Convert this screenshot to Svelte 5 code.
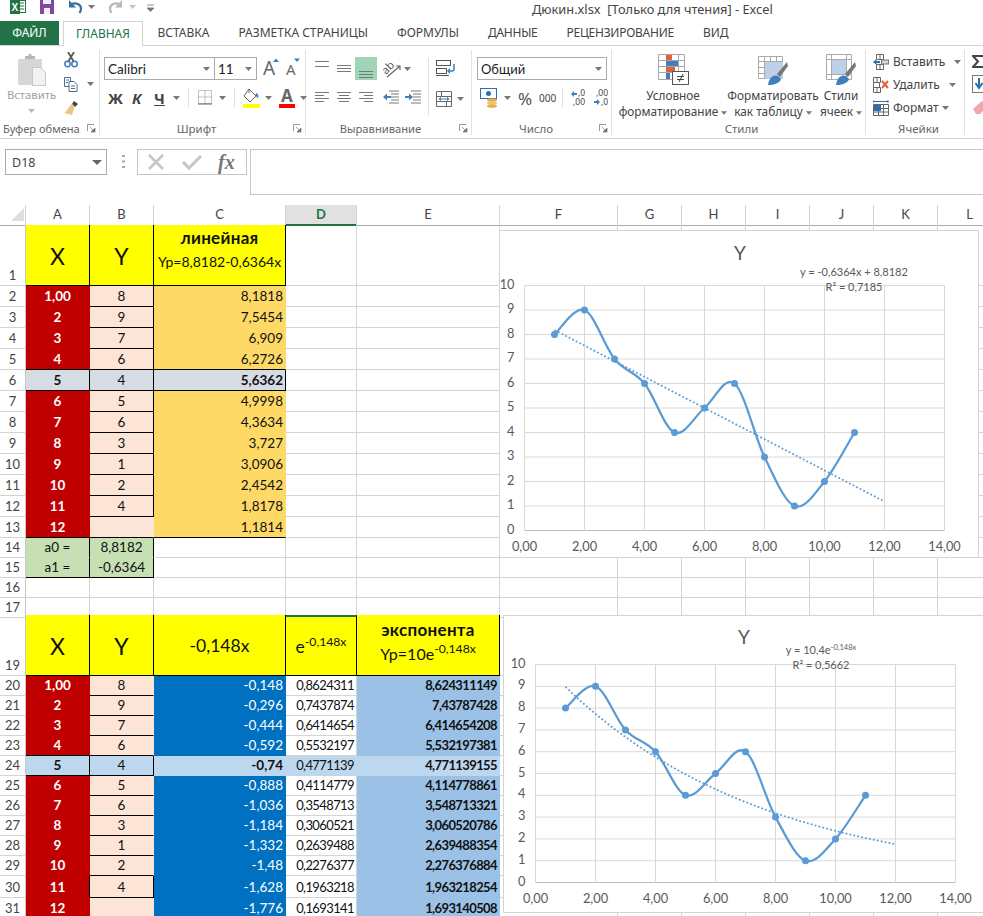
<script>
  const COLS = ['A', 'B', 'C', 'D', 'E', 'F', 'G', 'H', 'I', 'J', 'K', 'L'];
  const EMPTY_TAIL = 7; // F..L stay empty, charts lie over them

  const xs = ['1,00', '2', '3', '4', '5', '6', '7', '8', '9', '10', '11', '12'];
  const ys = ['8', '9', '7', '6', '4', '5', '6', '3', '1', '2', '4', ''];
  const linear = ['8,1818', '7,5454', '6,909', '6,2726', '5,6362', '4,9998', '4,3634', '3,727', '3,0906', '2,4542', '1,8178', '1,1814'];
  const power = ['-0,148', '-0,296', '-0,444', '-0,592', '-0,74', '-0,888', '-1,036', '-1,184', '-1,332', '-1,48', '-1,628', '-1,776'];
  const expo = ['0,8624311', '0,7437874', '0,6414654', '0,5532197', '0,4771139', '0,4114779', '0,3548713', '0,3060521', '0,2639488', '0,2276377', '0,1963218', '0,1693141'];
  const fit = ['8,624311149', '7,43787428', '6,414654208', '5,532197381', '4,771139155', '4,114778861', '3,548713321', '3,060520786', '2,639488354', '2,276376884', '1,963218254', '1,693140508'];

  const blank = (cls = '') => ({ t: '', cls });

  function firstTable() {
    return xs.map((x, i) => {
      const mid = i === 4;
      const rule = i === 3 || mid || i === 11 ? ' bb' : '';
      return {
        n: i + 2,
        h: 21,
        cells: [
          { t: x, cls: (mid ? 'grey br' : 'red') + ' mid strong' + rule },
          { t: ys[i], cls: (mid ? 'grey' : 'peach') + ' mid bb' + (i < 11 ? ' br' : '') },
          { t: linear[i], cls: (mid ? 'grey br strong' : 'orange') + ' end' + rule },
          blank(),
          blank()
        ]
      };
    });
  }

  function secondTable() {
    return xs.map((x, i) => {
      const mid = i === 4;
      const rule = i === 3 || mid ? ' bb' : '';
      return {
        n: i + 20,
        h: i === 10 ? 22 : i === 11 ? 21 : 20,
        cells: [
          { t: x, cls: (mid ? 'pale br' : 'red') + ' mid strong' + rule + (i === 10 ? ' br' : '') },
          { t: ys[i], cls: (mid ? 'pale br' : 'peach') + ' mid' + (i < 11 ? ' bb' : '') + (i === 10 ? ' br' : '') },
          { t: power[i], cls: (mid ? 'pale strong' : 'blue') + ' end' },
          { t: expo[i], cls: (mid ? 'pale' : '') + ' end long' },
          { t: fit[i], cls: (mid ? 'pale' : 'sky') + ' end strong long' }
        ]
      };
    });
  }

  const rows = [
    {
      n: 1,
      h: 61,
      cells: [
        { t: 'X', cls: 'yellow big br bb' },
        { t: 'Y', cls: 'yellow big br bb' },
        { t: 'Yp=8,8182-0,6364x', title: 'линейная', cls: 'yellow head br bb' },
        blank(),
        blank()
      ]
    },
    ...firstTable(),
    {
      n: 14,
      h: 20,
      cells: [{ t: 'a0 =', cls: 'green mid br' }, { t: '8,8182', cls: 'green mid br' }, blank(), blank(), blank()]
    },
    {
      n: 15,
      h: 20,
      cells: [{ t: 'a1 =', cls: 'green mid br bb' }, { t: '-0,6364', cls: 'green mid br bb' }, blank(), blank(), blank()]
    },
    { n: 16, h: 20, cells: [blank(), blank(), blank(), blank(), blank()] },
    { n: 17, h: 17, cells: [blank(), blank(), blank(), blank(), blank()] },
    {
      n: 19,
      h: 61,
      cells: [
        { t: 'X', cls: 'yellow big br bb' },
        { t: 'Y', cls: 'yellow big br bb' },
        { t: '-0,148x', cls: 'yellow medium br bb' },
        { t: 'e', sup: '-0,148x', cls: 'yellow medium up br bb sel' },
        { t: 'Yp=10e', sup: '-0,148x', title: 'экспонента', cls: 'yellow head tall br bb' }
      ]
    },
    ...secondTable()
  ];

  // Excel's smoothed scatter line: a Catmull-Rom curve through the points
  function smooth(points) {
    let d = `M${points[0][0]} ${points[0][1]}`;
    for (let i = 0; i < points.length - 1; i++) {
      const p0 = points[Math.max(i - 1, 0)];
      const p1 = points[i];
      const p2 = points[i + 1];
      const p3 = points[Math.min(i + 2, points.length - 1)];
      const c1 = [p1[0] + (p2[0] - p0[0]) / 6, p1[1] + (p2[1] - p0[1]) / 6];
      const c2 = [p2[0] - (p3[0] - p1[0]) / 6, p2[1] - (p3[1] - p1[1]) / 6];
      d += `C${c1[0]} ${c1[1]} ${c2[0]} ${c2[1]} ${p2[0]} ${p2[1]}`;
    }
    return d;
  }

  function makeChart(o) {
    const px = (x) => o.x0 + (x / 14) * o.w;
    const py = (y) => o.y0 + o.h - (y / 10) * o.h;
    const values = ys.slice(0, 11).map(Number);
    const points = values.map((y, i) => [px(i + 1), py(y)]);
    const trend = [];
    for (let x = 1; x <= 12.001; x += 0.25) trend.push(`${px(x)},${py(o.f(x))}`);
    return {
      ...o,
      points,
      line: smooth(points),
      trend: trend.join(' '),
      xTicks: [0, 2, 4, 6, 8, 10, 12, 14].map((v) => ({ at: px(v), label: v + ',00' })),
      yTicks: [0, 1, 2, 3, 4, 5, 6, 7, 8, 9, 10].map((v) => ({ at: py(v), label: String(v) }))
    };
  }

  const chartA = makeChart({
    cls: 'chart-a', width: 480, height: 328, x0: 24.5, y0: 54.5, w: 420, h: 245,
    f: (x) => 8.8182 - 0.6364 * x,
    titleX: 240, titleY: 29, eqX: 354, eqY: 45, r2Y: 60, eq: 'y = -0,6364x + 8,8182', r2: 'R² = 0,7185'
  });
  const chartB = makeChart({
    cls: 'chart-b', width: 490, height: 298, x0: 31.5, y0: 48.5, w: 420, h: 218,
    f: (x) => 10.4 * Math.exp(-0.148 * x),
    titleX: 240, titleY: 28, eqX: 317, eqY: 38, r2Y: 53, eq: 'y = 10,4e', eqSup: '-0,148x', r2: 'R² = 0,5662'
  });
</script>

{#snippet caret(cls = '')}
  <svg class="caret {cls}" width="7" height="4" viewBox="0 0 7 4"><path d="M0 0h7L3.5 4z" fill="#777" /></svg>
{/snippet}

{#snippet launcher()}
  <svg class="launcher" width="9" height="9" viewBox="0 0 9 9">
    <path d="M.5 7V.5H7" fill="none" stroke="#999" />
    <path d="M3 3l4 4M8 4v4H4z" fill="#777" stroke="#777" stroke-width=".7" />
  </svg>
{/snippet}

{#snippet lines(ws, gap = 3, y0 = 4)}
  <svg width="15" height="15" viewBox="0 0 15 15">
    {#each ws as w, i}
      <rect x={w[0]} y={y0 + i * gap} width={w[1]} height="1" fill="#777" />
    {/each}
  </svg>
{/snippet}

{#snippet chart(c)}
  <div class="chart {c.cls}">
    <svg width={c.width} height={c.height} viewBox="0 0 {c.width} {c.height}">
      {#each c.yTicks as t}
        <line x1={c.x0} x2={c.x0 + c.w} y1={t.at} y2={t.at} stroke={t.label === '0' ? '#bfbfbf' : '#d9d9d9'} />
        <text class="tick" x={c.x0 - 10} y={t.at + 3} text-anchor="end">{t.label}</text>
      {/each}
      {#each c.xTicks as t}
        <line x1={t.at} x2={t.at} y1={c.y0} y2={c.y0 + c.h} stroke="#d9d9d9" />
        <text class="tick" x={t.at} y={c.y0 + c.h + 20} text-anchor="middle">{t.label}</text>
      {/each}
      <polyline points={c.trend} fill="none" stroke="#5b9bd5" stroke-width="1.75" stroke-dasharray="1.8 2.2" />
      <path d={c.line} fill="none" stroke="#5b9bd5" stroke-width="2.25" stroke-linecap="round" />
      {#each c.points as p}
        <circle cx={p[0]} cy={p[1]} r="3.5" fill="#5b9bd5" />
      {/each}
      <text class="ctitle" x={c.titleX} y={c.titleY} text-anchor="middle">Y</text>
      <text class="eq" x={c.eqX} y={c.eqY} text-anchor="middle">{c.eq}{#if c.eqSup}<tspan class="eqsup" dy="-4">{c.eqSup}</tspan>{/if}</text>
      <text class="eq" x={c.eqX} y={c.r2Y} text-anchor="middle">{c.r2}</text>
    </svg>
  </div>
{/snippet}

<div class="app">
  <header class="titlebar">
    <svg class="qat" width="160" height="21" viewBox="0 0 160 21">
      <rect x="17.5" y="0.5" width="8" height="12" fill="#fff" stroke="#217346" />
      <path d="M19 3h5M19 6h5M19 9h5" stroke="#217346" />
      <rect x="10" y="0" width="10" height="14" fill="#217346" />
      <text x="11.5" y="11" class="qat-x">X</text>
      <path d="M40 0h14v14H40z" fill="#7f4a9e" />
      <rect x="43" y="0" width="8" height="4" fill="#f3eef6" />
      <rect x="44" y="8" width="6" height="6" fill="#f3eef6" />
      <path d="M71 4.5c5-2.5 10 0 10 4 0 1.500-.5 3-1.500 4.500" fill="none" stroke="#3a6ea5" stroke-width="2.2" />
      <path d="M69 0v7.500h7z" fill="#3a6ea5" />
      <path d="M88 5h7l-3.500 4z" fill="#777" />
      <path d="M120 4.500c-5-2.500-10 0-10 4 0 1.500.5 3 1.500 4.500" fill="none" stroke="#b8b8b8" stroke-width="2.2" />
      <path d="M122 0v7.500h-7z" fill="#b8b8b8" />
      <path d="M129 5h7l-3.500 4z" fill="#c4c4c4" />
      <path d="M147 5h7M147 8h7l-3.500 3.500z" fill="#777" stroke="#777" stroke-width=".8" />
    </svg>
    <span class="doc">Дюкин.xlsx&nbsp; [Только для чтения] - Excel</span>
  </header>

  <nav class="tabs">
    <span class="tab file">ФАЙЛ</span>
    <span class="tab active">ГЛАВНАЯ</span>
    <span class="tab">ВСТАВКА</span>
    <span class="tab">РАЗМЕТКА СТРАНИЦЫ</span>
    <span class="tab">ФОРМУЛЫ</span>
    <span class="tab tight">ДАННЫЕ</span>
    <span class="tab tight">РЕЦЕНЗИРОВАНИЕ</span>
    <span class="tab">ВИД</span>
  </nav>

  <section class="ribbon">
    <!-- Буфер обмена -->
    <div class="grp g-clip">
      <div class="body row">
        <div class="paste">
          <svg width="30" height="34" viewBox="0 0 30 34">
            <rect x="1" y="6" width="24" height="26" rx="1" fill="#d8d5d7" />
            <path d="M8 6V3h3.500V1h3v2H18v3z" fill="#b9b5b8" />
            <path d="M15.500 14.500h8l5 5v13h-13z" fill="#f4f1f5" stroke="#c9c5ca" />
          </svg>
          <span class="paste-text">Вставить</span>
          {@render caret('paste-caret')}
        </div>
        <div class="clip-tools">
          <svg width="16" height="16" viewBox="0 0 16 16">
            <path d="M5 10L11 0M11 10L5 0" stroke="#5a5a5a" stroke-width="1.800" />
            <circle cx="4.500" cy="12" r="2.700" fill="none" stroke="#3f7fbf" stroke-width="1.500" />
            <circle cx="11.500" cy="12" r="2.700" fill="none" stroke="#3f7fbf" stroke-width="1.500" />
          </svg>
          <div class="row center">
            <svg width="16" height="16" viewBox="0 0 16 16">
              <path d="M1.500 1.500h6v9h-6z" fill="#fff" stroke="#4d6f8f" />
              <path d="M6 5.500h5l3 3v7H6z" fill="#fff" stroke="#4d6f8f" />
              <path d="M3 4h3M3 6.500h2M8 10h4M8 12.500h4" stroke="#4d6f8f" />
            </svg>
            {@render caret('ml8')}
          </div>
          <svg width="17" height="16" viewBox="0 0 17 16">
            <path d="M11 1l4 3-3 3-3-3z" fill="#444" />
            <path d="M9 4l3 3-4 8-7-3z" fill="#edc587" transform="rotate(-8 8 8)" />
          </svg>
        </div>
      </div>
      <div class="lab lab-clip">Буфер обмена{@render launcher()}</div>
    </div>

    <!-- Шрифт -->
    <div class="grp g-font">
      <div class="body">
        <div class="row f-top">
          <div class="combo c-font"><span>Calibri</span>{@render caret()}</div>
          <div class="combo c-size"><span>11</span>{@render caret()}</div>
          <svg class="ml6" width="17" height="23" viewBox="0 0 17 23">
            <text class="glyph-a" x="0" y="18">A</text>
            <path d="M10 5l3-3.500L16 5z" fill="#3f7fbf" />
          </svg>
          <svg class="ml6" width="15" height="23" viewBox="0 0 15 23">
            <text class="glyph-a small" x="0" y="18">A</text>
            <path d="M8 1.500h6L11 5z" fill="#3f7fbf" />
          </svg>
        </div>
        <div class="row center f-bottom">
          <span class="ft ft-b">Ж</span>
          <span class="ft ft-i">К</span>
          <span class="ft ft-u">Ч</span>
          {@render caret('ml8')}
          <i class="vsep ml8"></i>
          <svg class="ml9" width="14" height="15" viewBox="0 0 14 15">
            <path d="M.5.500h13v13H.5zM7 .5v13M.5 7h13" fill="none" stroke="#8a8a8a" stroke-dasharray="1 1" />
            <path d="M0 14h14" stroke="#666" />
          </svg>
          {@render caret('ml7')}
          <i class="vsep ml8"></i>
          <svg class="ml8" width="17" height="20" viewBox="0 0 17 20">
            <path d="M6 1l7 7-6 6-6-6z" fill="#fff" stroke="#666" />
            <path d="M6 1v4" stroke="#666" />
            <path d="M13 5c2 .5 3 2.500 2 5-2-1-3-3-2-5z" fill="#3f7fbf" />
            <rect y="16" width="17" height="4" fill="#ff0" />
          </svg>
          {@render caret('ml5')}
          <svg class="ml7" width="16" height="20" viewBox="0 0 16 20">
            <text class="glyph-a bold" x="2" y="14">A</text>
            <rect y="16" width="16" height="4" fill="#f00" />
          </svg>
          {@render caret('ml5')}
        </div>
      </div>
      <div class="lab shift">Шрифт{@render launcher()}</div>
    </div>

    <!-- Выравнивание -->
    <div class="grp g-align">
      <div class="body row">
        <div class="align-left">
          <div class="row a-top">
            <div class="a-slot">{@render lines([[0, 14], [0, 14]], 5, 3)}</div>
            <div class="a-slot ml7 down4">{@render lines([[0, 14], [0, 14], [0, 14]], 3, 3)}</div>
            <div class="a-on">{@render lines([[0, 14], [0, 14], [0, 14]], 3, 6)}</div>
            <svg class="ml6 a-orient" width="18" height="19" viewBox="0 0 18 19">
              <text class="orient" transform="rotate(-45 5 11)" x="0" y="13">ab</text>
              <path d="M4 18L17 7M13 7h4v4" fill="none" stroke="#666" stroke-width="1.200" />
            </svg>
            {@render caret('ml3 a-caret')}
          </div>
          <div class="row a-bottom">
            <div class="a-slot">{@render lines([[0, 14], [0, 9], [0, 14], [0, 9]], 3, 2)}</div>
            <div class="a-slot ml7">{@render lines([[0, 14], [2, 10], [0, 14], [2, 10]], 3, 2)}</div>
            <div class="a-slot ml7">{@render lines([[0, 14], [5, 9], [0, 14], [5, 9]], 3, 2)}</div>
            <svg class="ml9" width="16" height="15" viewBox="0 0 16 15">
              <path d="M6 2h10M8 5h8M8 8h8M8 11h8M6 14h10" stroke="#777" />
              <path d="M0 8l4-3.500V7h4v2H4v2.500z" fill="#3f7fbf" />
            </svg>
            <svg class="ml6" width="16" height="15" viewBox="0 0 16 15">
              <path d="M6 2h10M8 5h8M8 8h8M8 11h8M6 14h10" stroke="#777" />
              <path d="M8 8L4 4.500V7H0v2h4v2.500z" fill="#3f7fbf" />
            </svg>
          </div>
        </div>
        <i class="vsep tall"></i>
        <div class="align-right">
          <svg width="20" height="16" viewBox="0 0 20 16">
            <rect x=".5" y=".5" width="14" height="5" fill="#fff" stroke="#555" />
            <rect x=".5" y="8.500" width="10" height="5" fill="#fff" stroke="#555" />
            <path d="M0 15.500h13" stroke="#555" />
            <path d="M18 4v5a2 2 0 01-2 2h-4" fill="none" stroke="#3f7fbf" stroke-width="1.500" />
            <path d="M14 8l-3 3 3 3z" fill="#3f7fbf" />
          </svg>
          <div class="row center merge">
            <svg width="16" height="16" viewBox="0 0 16 16">
              <path d="M.5.500h15v15H.5zM.5 5.500h15M.5 10.500h15M5.500.5v5M10.500 10.500v5" fill="none" stroke="#666" />
              <rect x="1" y="6" width="14" height="4" fill="#fff" />
              <path d="M3 8h10" stroke="#3f7fbf" />
              <path d="M5 6L2.500 8 5 10zM11 6l2.500 2L11 10z" fill="#3f7fbf" />
            </svg>
            {@render caret('ml5')}
          </div>
        </div>
      </div>
      <div class="lab shift narrow">Выравнивание{@render launcher()}</div>
    </div>

    <!-- Число -->
    <div class="grp g-num">
      <div class="body">
        <div class="combo c-num"><span>Общий</span>{@render caret()}</div>
        <div class="row center n-bottom">
          <svg width="18" height="20" viewBox="0 0 18 20">
            <rect x=".5" y=".5" width="16" height="10" fill="#fff" stroke="#2b6fb0" />
            <circle cx="8.500" cy="5.500" r="2.500" fill="#2b6fb0" />
            <ellipse cx="12" cy="12" rx="5" ry="1.800" fill="#e8b04c" />
            <ellipse cx="12" cy="15" rx="5" ry="1.800" fill="#eec477" />
            <ellipse cx="12" cy="18" rx="5" ry="1.800" fill="#e8b04c" />
          </svg>
          {@render caret('ml6')}
          <span class="pct">%</span>
          <span class="kilo">000</span>
          <i class="vsep ml8"></i>
          <svg class="ml8 decimal" width="17" height="19" viewBox="0 0 17 19">
            <text class="dec" x="7" y="7">,0</text>
            <text class="dec" x="2" y="16">,00</text>
            <path d="M0 5l3-3v2h3v2H3v2z" fill="#3f7fbf" />
          </svg>
          <svg class="ml6 decimal" width="17" height="19" viewBox="0 0 17 19">
            <text class="dec" x="2" y="7">,00</text>
            <text class="dec" x="7" y="16">,0</text>
            <path d="M6 13L3 10v2H0v2h3v2z" fill="#3f7fbf" />
          </svg>
        </div>
      </div>
      <div class="lab shift">Число{@render launcher()}</div>
    </div>

    <!-- Стили -->
    <div class="grp g-styles">
      <div class="body row">
        <div class="bigbtn b1">
          <svg width="31" height="32" viewBox="0 0 31 32">
            <path d="M.5.500h26v25H.5zM.5 6.500h26M.5 12.500h26M.5 18.500h26M8.500.5v25M20.500.5v25" fill="none" stroke="#a8a8a8" />
            <rect x="8" y="1" width="6" height="5" fill="#e0623a" />
            <rect x="8" y="7" width="12" height="5" fill="#3f7fbf" />
            <rect x="8" y="13" width="9" height="5" fill="#e0623a" />
            <rect x="8" y="19" width="4" height="6" fill="#3f7fbf" />
            <rect x="14.500" y="17.500" width="16" height="13" fill="#fff" stroke="#555" />
            <path d="M19 22.500h7M19 25.500h7M25 20l-4 8" stroke="#444" />
          </svg>
          <span>Условное</span>
          <span>форматирование {@render caret('inl')}</span>
        </div>
        <div class="bigbtn b2">
          <svg class="drop2" width="30" height="30" viewBox="0 0 30 30">
            <path d="M.5.500h24v22H.5zM.5 5.500h24M.5 11.500h24M.5 17.500h24M6.500.5v22M12.500.5v22M18.500.5v22" fill="none" stroke="#aaa" />
            <rect x="7" y="6" width="18" height="17" fill="#bdd0e6" />
            <path d="M29 6l-10 12 3 3L30 10z" fill="#777" />
            <path d="M20 20c-5-2-9 2-10 9 6 0 12-2 13-6z" fill="#3f7fbf" />
          </svg>
          <span>Форматировать</span>
          <span>как таблицу {@render caret('inl')}</span>
        </div>
        <div class="bigbtn b3">
          <svg width="30" height="32" viewBox="0 0 30 32">
            <path d="M.5.500h25v25H.5zM.5 5.500h25M.5 20.500h25M5.500.5v25M20.500.5v25" fill="none" stroke="#aaa" />
            <rect x="6" y="6" width="14" height="14" fill="#bdd0e6" />
            <path d="M29 8L19 20l3 3 8-11z" fill="#777" />
            <path d="M20 22c-5-2-9 2-10 9 6 0 12-2 13-6z" fill="#3f7fbf" />
          </svg>
          <span>Стили</span>
          <span>ячеек {@render caret('inl')}</span>
        </div>
      </div>
      <div class="lab">Стили</div>
    </div>

    <!-- Ячейки -->
    <div class="grp g-cells">
      <div class="body">
        <div class="cellrow">
          <svg width="16" height="16" viewBox="0 0 16 16">
            <path d="M3.500.5h7v5h-7zM3.500 10.500h7v5h-7zM7 .5v5M7 10.500v5" fill="none" stroke="#666" />
            <rect x="8.500" y="6" width="7" height="4" fill="#d0d7e0" stroke="#777" />
            <path d="M0 8l3.500-3v2H7v2H3.500v2z" fill="#2b6fb0" />
          </svg>
          <span>Вставить</span>{@render caret('ml9')}
        </div>
        <div class="cellrow">
          <svg width="16" height="16" viewBox="0 0 16 16">
            <path d="M.5.500h7v5h-7zM.5 10.500h7v5h-7zM4 .5v5M4 10.500v5M.5 5.500v5h6v-5" fill="none" stroke="#666" />
            <path d="M9 4l6 7M15 4l-6 7" stroke="#e0623a" stroke-width="2" />
          </svg>
          <span>Удалить</span>{@render caret('ml9')}
        </div>
        <div class="cellrow">
          <svg width="16" height="16" viewBox="0 0 16 16">
            <path d="M0 1.500h15M0 0v3M15 0v3" stroke="#2b6fb0" />
            <path d="M.5 4.500h15v11H.5zM.5 8.500h15M.5 12h15M5.500 4.500v11M10.500 4.500v11" fill="none" stroke="#666" />
            <rect x="1" y="5" width="7" height="6" fill="#2b6fb0" />
          </svg>
          <span>Формат</span>{@render caret('ml3')}
        </div>
      </div>
      <div class="lab">Ячейки</div>
    </div>

    <!-- Редактирование, обрезано краем окна -->
    <div class="grp g-edit">
      <svg width="12" height="64" viewBox="0 0 12 64">
        <path d="M11 1H1l5 5.500L1 12h10" fill="none" stroke="#444" stroke-width="2" />
        <rect x=".5" y="20.500" width="14" height="17" fill="#fff" stroke="#777" />
        <path d="M7 23v8M3.500 28L7 33l3.500-5" fill="none" stroke="#2b6fb0" stroke-width="2" />
        <path d="M1 54l9-8 6 5-8 8H4z" fill="#f1a6ad" />
      </svg>
    </div>
  </section>

  <section class="formula">
    <div class="namebox"><span>D18</span><svg width="10" height="5" viewBox="0 0 10 5"><path d="M0 0h10L5 5z" fill="#666" /></svg></div>
    <svg class="dots" width="3" height="14" viewBox="0 0 3 14"><path d="M0 1h3M0 6.500h3M0 12h3" stroke="#aaa" stroke-width="2" stroke-dasharray="2 0" /></svg>
    <div class="fbtns">
      <svg width="18" height="16" viewBox="0 0 18 16"><path d="M2 1l14 14M16 1L2 15" stroke="#c6c6c6" stroke-width="2.600" /></svg>
      <svg width="20" height="16" viewBox="0 0 20 16"><path d="M1 8l6 6L19 2" fill="none" stroke="#c6c6c6" stroke-width="3" /></svg>
      <span class="fx">fx</span>
    </div>
    <div class="finput"></div>
  </section>

  <main class="sheet">
    <div class="line colhead">
      <div class="corner"><svg width="13" height="13" viewBox="0 0 13 13"><path d="M13 0v13H0z" fill="#dfdfdf" /></svg></div>
      {#each COLS as col}
        <div class="ch" class:on={col === 'D'}>{col}</div>
      {/each}
    </div>

    {#each rows as r (r.n)}
      <div class="line" style:height="{r.h}px">
        <div class="rh">{r.n}</div>
        {#each r.cells as c}
          <div class="cell {c.cls}">
            {#if c.title}<b class="title">{c.title}</b>{/if}
            <span>{c.t}{#if c.sup}<sup>{c.sup}</sup>{/if}</span>
          </div>
        {/each}
        {#each { length: EMPTY_TAIL } as _}
          <div class="cell"></div>
        {/each}
      </div>
    {/each}

    {@render chart(chartA)}
    {@render chart(chartB)}
  </main>
</div>

<style>
  :global(body) {
    overflow: hidden;
    background: #fff;
  }

  .app {
    width: 983px;
    height: 916px;
    overflow: hidden;
    background: #fff;
    color: #444;
    font-family: "Noto Sans", "Liberation Sans", sans-serif;
    font-size: 12px;
  }

  .row { display: flex; }
  .center { align-items: center; }
  svg { display: block; flex-shrink: 0; }

  .ml3 { margin-left: 3px; }
  .ml5 { margin-left: 5px; }
  .ml6 { margin-left: 6px; }
  .ml7 { margin-left: 7px; }
  .ml8 { margin-left: 8px; }
  .ml9 { margin-left: 9px; }

  .titlebar {
    height: 21px;
    display: flex;
  }
  .qat-x {
    font: bold 10px "Liberation Sans", sans-serif;
    fill: #fff;
  }
  .doc {
    margin-left: 372px;
    font-size: 12.8px;
    line-height: 18px;
    white-space: nowrap;
  }

  .tabs {
    height: 25px;
    display: flex;
    align-items: stretch;
    border-bottom: 1px solid #d4d4d4;
    box-sizing: border-box;
    white-space: nowrap;
  }
  .tab {
    padding: 0 14.5px;
    font-size: 12px;
    line-height: 24px;
  }
  .tight { letter-spacing: -0.25px; }
  .file {
    width: 59px;
    box-sizing: border-box;
    padding: 0;
    text-align: center;
    background: #217346;
    color: #fff;
    margin-right: 4px;
  }
  .active {
    width: 80px;
    box-sizing: border-box;
    padding: 0;
    text-align: center;
    color: #217346;
    background: #fff;
    border: 1px solid #d4d4d4;
    border-bottom: 0;
    height: 25px;
  }

  .ribbon {
    height: 93px;
    box-sizing: border-box;
    display: flex;
    border-bottom: 1px solid #d4d4d4;
    overflow: hidden;
  }
  .grp {
    box-sizing: border-box;
    height: 85px;
    margin-top: 4px;
    border-right: 1px solid #e1e1e1;
    position: relative;
    flex-shrink: 0;
  }
  .body { height: 72px; }
  .lab {
    height: 13px;
    line-height: 14px;
    text-align: center;
    font-size: 11.5px;
    color: #666;
    white-space: nowrap;
  }
  .shift { padding-right: 16px; }
  .narrow { font-size: 11.2px; }
  .launcher {
    position: absolute;
    right: 3px;
    bottom: 2px;
  }

  .g-clip { width: 100px; }
  .lab-clip { text-align: left; padding-left: 3px; font-size: 11.1px; }
  .paste {
    width: 63px;
    display: flex;
    flex-direction: column;
    align-items: center;
    padding-top: 3px;
  }
  .paste-text { line-height: 16px; color: #a0a0a0; font-size: 11.3px; }
  .paste-caret { margin-top: 6px; opacity: 0.5; }
  .clip-tools {
    display: flex;
    flex-direction: column;
    gap: 8px;
    padding-top: 2px;
  }

  .g-font { width: 206px; padding-left: 4px; }
  .f-top { padding-top: 7px; height: 23px; }
  .combo {
    box-sizing: border-box;
    height: 23px;
    border: 1px solid #ababab;
    display: flex;
    align-items: center;
    justify-content: space-between;
    padding: 0 4px 0 3px;
    font-family: Lato, sans-serif;
    font-size: 13.5px;
    color: #222;
  }
  .c-font { width: 111px; }
  .c-size { width: 43px; margin-left: -1px; }
  .glyph-a {
    font: 19px "Noto Sans", sans-serif;
    fill: #666;
  }
  .glyph-a.small { font-size: 15px; }
  .glyph-a.bold { font-size: 17px; font-weight: 700; }
  .f-bottom {
    margin-top: 7px;
    height: 21px;
    padding-left: 4px;
  }
  .ft {
    color: #444;
    font-size: 15px;
    font-weight: 700;
    line-height: 20px;
  }
  .ft-b { width: 13px; }
  .ft-i { width: 9px; margin-left: 11px; font-style: italic; }
  .ft-u { width: 11px; margin-left: 13px; text-decoration: underline; }
  .vsep {
    display: block;
    width: 1px;
    height: 20px;
    background: #e1e1e1;
    flex-shrink: 0;
  }
  .vsep.tall { height: 52px; margin-top: 8px; }

  .g-align { width: 166px; }
  .align-left { width: 122px; padding-left: 9px; box-sizing: border-box; }
  .a-top { height: 30px; padding-top: 7px; box-sizing: border-box; align-items: flex-start; }
  .a-slot { padding-top: 1px; }
  .down4 { padding-top: 5px; }
  .a-on {
    width: 22px;
    height: 23px;
    margin-left: 3px;
    padding-left: 4px;
    padding-top: 8px;
    box-sizing: border-box;
    background: #9fd5b7;
  }
  .a-orient { margin-top: 2px; }
  .a-caret { margin-top: 10px; }
  .a-bottom { margin-top: 9px; }
  .orient { font: 11px "Noto Sans", sans-serif; fill: #555; }
  .align-right { padding-left: 7px; padding-top: 10px; }
  .merge { margin-top: 15px; }

  .g-num { width: 140px; padding-left: 5px; }
  .g-num .body { padding-top: 7px; box-sizing: border-box; }
  .c-num { width: 130px; font-size: 13px; }
  .n-bottom { margin-top: 7px; height: 22px; padding-left: 3px; }
  .pct { margin-left: 7px; font-size: 17px; width: 15px; color: #555; }
  .kilo { margin-left: 6px; font-size: 10px; width: 15px; color: #444; }
  .dec { font: 8.500px "Noto Sans", sans-serif; fill: #444; }
  .decimal { overflow: visible; }

  .g-styles { width: 254px; padding-left: 6px; }
  .bigbtn {
    display: flex;
    flex-direction: column;
    align-items: center;
    padding-top: 4px;
    white-space: nowrap;
    line-height: 16px;
    font-size: 11.8px;
  }
  .bigbtn > svg { margin-bottom: 1px; }
  .b1 { width: 110px; }
  .b2 { width: 90px; }
  .b3 { width: 46px; }
  .drop2 { margin-top: 2px; }
  .inl { display: inline-block; vertical-align: middle; width: 6px; }

  .g-cells { width: 99px; padding-left: 7px; }
  .cellrow {
    height: 23px;
    display: flex;
    align-items: center;
    white-space: nowrap;
  }
  .cellrow span { margin-left: 4px; }

  .g-edit { flex: 1; padding: 5px 0 0 7px; border: 0; }

  .formula {
    height: 66px;
    box-sizing: border-box;
    padding: 10px 0 0 5px;
    display: flex;
    align-items: flex-start;
  }
  .namebox {
    box-sizing: border-box;
    width: 102px;
    height: 26px;
    border: 1px solid #ababab;
    display: flex;
    align-items: center;
    justify-content: space-between;
    padding: 0 4px 0 6px;
    font-size: 12.5px;
  }
  .dots { margin: 6px 0 0 15px; }
  .fbtns {
    box-sizing: border-box;
    width: 110px;
    height: 26px;
    margin-left: 12px;
    border: 1px solid #c6c6c6;
    display: flex;
    align-items: center;
    gap: 17px;
    padding-left: 9px;
  }
  .fx {
    font: italic bold 20px "Liberation Serif", serif;
    color: #777;
    margin-left: -1px;
  }
  .finput {
    flex: 1;
    height: 46px;
    margin-left: 3px;
    box-sizing: border-box;
    border: 1px solid #c6c6c6;
    border-right: 0;
  }

  .sheet {
    position: relative;
    height: 711px;
    overflow: hidden;
    font-family: Lato, "Liberation Sans", sans-serif;
    font-size: 13.5px;
    color: #111;
  }
  .line {
    display: grid;
    grid-template-columns: 26px 64px 64px 132px 71px 143px 118px repeat(6, 64px);
    width: 1002px;
  }
  .colhead { height: 20px; }
  .corner {
    box-sizing: border-box;
    padding: 3px 0 0 11px;
    border-bottom: 1px solid #ababab;
    border-right: 1px solid #d4d4d4;
  }
  .ch {
    box-sizing: border-box;
    text-align: center;
    line-height: 19px;
    font-size: 13px;
    color: #444;
    border-right: 1px solid #d4d4d4;
    border-bottom: 1px solid #ababab;
  }
  .ch.on {
    background: #e1e1e1;
    color: #217346;
    font-weight: 700;
    border-bottom: 2px solid #217346;
  }
  .rh {
    box-sizing: border-box;
    display: flex;
    align-items: flex-end;
    justify-content: center;
    line-height: 19px;
    font-size: 13px;
    color: #444;
    border-right: 1px solid #c6c6c6;
    border-bottom: 1px solid #d4d4d4;
  }

  .cell {
    box-sizing: border-box;
    display: flex;
    align-items: flex-end;
    justify-content: flex-end;
    padding: 0 2px;
    line-height: 19px;
    border-right: 1px solid #d4d4d4;
    border-bottom: 1px solid #d4d4d4;
    white-space: nowrap;
    min-width: 0;
  }
  .red, .peach, .orange, .grey, .green, .yellow, .blue, .sky, .pale {
    border-color: transparent;
  }
  .red { background: #c00000; color: #fff; }
  .peach { background: #fce4d6; }
  .orange { background: #ffd966; }
  .grey { background: #d6dce4; }
  .green { background: #c6e0b4; }
  .yellow { background: #ff0; }
  .blue { background: #0070c0; color: #fff; }
  .sky { background: #9bc2e6; }
  .pale { background: #bdd7ee; }
  .mid { justify-content: center; }
  .end { justify-content: flex-end; }
  .strong { font-weight: 700; }
  .long { font-size: 13px; letter-spacing: -0.6px; }
  .bb { border-bottom-color: #000; }
  .br { border-right-color: #000; }
  .sel { border-top: 2px solid #217346; }

  .big {
    justify-content: center;
    align-items: center;
    font-size: 23px;
    padding-top: 2px;
  }
  .medium {
    justify-content: center;
    align-items: center;
    font-size: 17.5px;
  }
  .medium sup, .tall sup {
    font-size: 12.2px;
    line-height: 0;
    vertical-align: 7px;
  }
  .head {
    flex-direction: column;
    align-items: center;
    justify-content: center;
    font-size: 14px;
    line-height: 24px;
    padding-bottom: 10px;
  }
  .title {
    font-size: 17px;
    letter-spacing: 0.3px;
    line-height: 24px;
  }
  .tall { font-size: 16px; padding-bottom: 6px; }

  .chart {
    position: absolute;
    box-sizing: border-box;
    background: #fff;
    border: 1px solid #d4d4d4;
  }
  .chart-a {
    left: 499px;
    top: 25px;
    width: 480px;
    height: 328px;
  }
  .chart-b {
    left: 503px;
    top: 410px;
    width: 490px;
    height: 298px;
  }
  .tick {
    font: 12.8px Lato, sans-serif;
    fill: #595959;
  }
  .ctitle {
    font: 19px Lato, sans-serif;
    fill: #595959;
  }
  .eq {
    font: 11px Lato, sans-serif;
    fill: #595959;
  }
  .eqsup { font-size: 7.500px; }
</style>
